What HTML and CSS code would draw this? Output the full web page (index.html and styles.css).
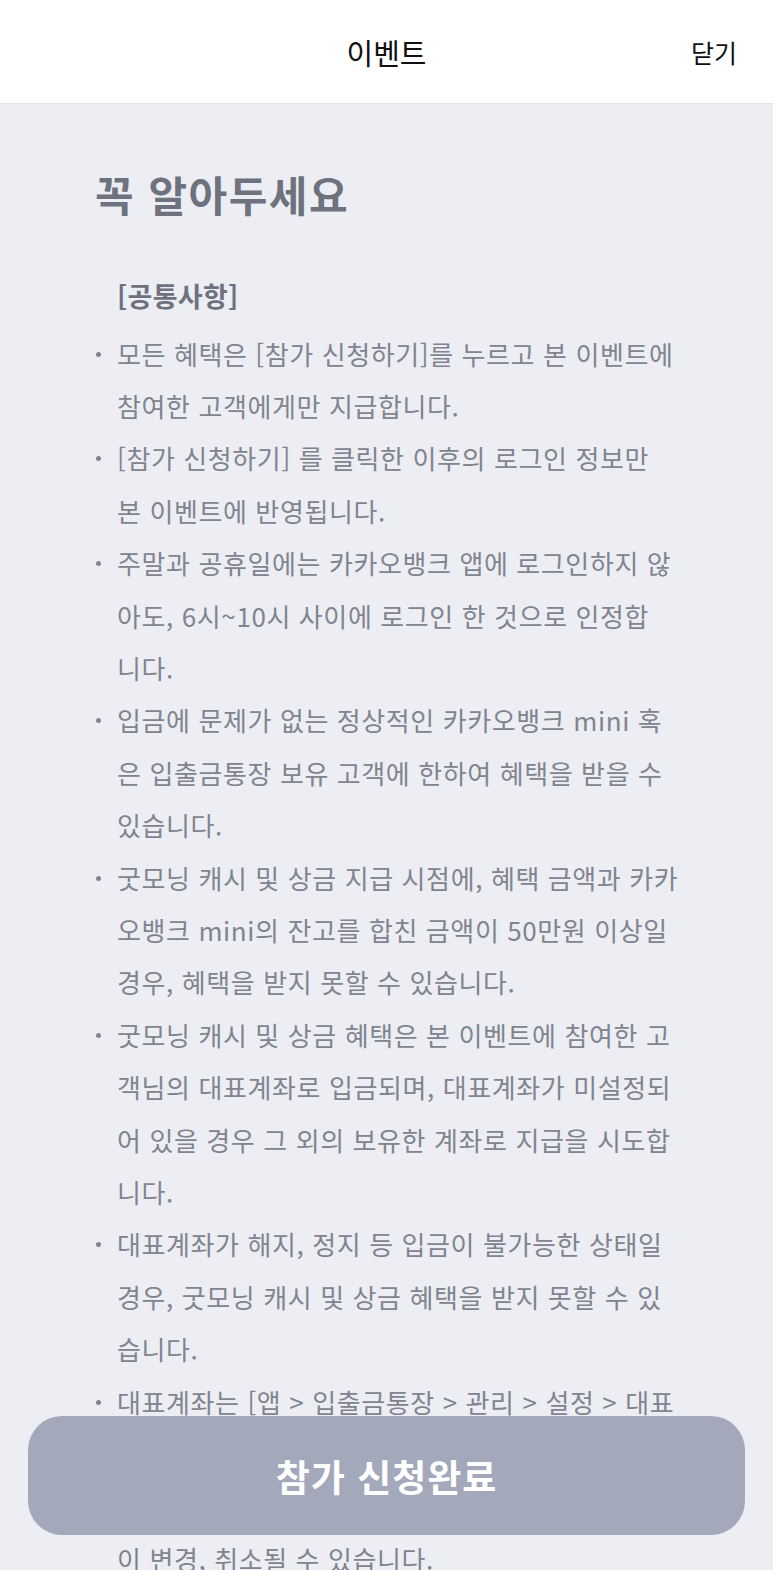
FILE: index.html
```html
<!DOCTYPE html>
<html lang="ko">
<head>
    <meta charset="UTF-8">
    <meta name="viewport" content="width=device-width, initial-scale=1.0">
    <title>이벤트</title>
    <link rel="stylesheet" href="styles.css">
</head>
<body>
    <header class="top-bar">
        <h1 class="top-title">이벤트</h1>
        <a class="close-btn" href="#">닫기</a>
    </header>

    <main class="notice">
        <h2 class="notice-title">꼭 알아두세요</h2>
        <h3 class="notice-sub">[공통사항]</h3>
        <ul class="notice-list">
            <li>모든 혜택은 [참가 신청하기]를 누르고 본 이벤트에<br>참여한 고객에게만 지급합니다.</li>
            <li>[참가 신청하기] 를 클릭한 이후의 로그인 정보만<br>본 이벤트에 반영됩니다.</li>
            <li>주말과 공휴일에는 카카오뱅크 앱에 로그인하지 않<br>아도, 6시~10시 사이에 로그인 한 것으로 인정합<br>니다.</li>
            <li>입금에 문제가 없는 정상적인 카카오뱅크 mini 혹<br>은 입출금통장 보유 고객에 한하여 혜택을 받을 수<br>있습니다.</li>
            <li>굿모닝 캐시 및 상금 지급 시점에, 혜택 금액과 카카<br>오뱅크 mini의 잔고를 합친 금액이 50만원 이상일<br>경우, 혜택을 받지 못할 수 있습니다.</li>
            <li>굿모닝 캐시 및 상금 혜택은 본 이벤트에 참여한 고<br>객님의 대표계좌로 입금되며, 대표계좌가 미설정되<br>어 있을 경우 그 외의 보유한 계좌로 지급을 시도합<br>니다.</li>
            <li>대표계좌가 해지, 정지 등 입금이 불가능한 상태일<br>경우, 굿모닝 캐시 및 상금 혜택을 받지 못할 수 있<br>습니다.</li>
            <li>대표계좌는 [앱 &gt; 입출금통장 &gt; 관리 &gt; 설정 &gt; 대표<br>계좌 설정]에서 변경할 수 있습니다.</li>
            <li>본 이벤트는 당행 사정에 따라 사전 공지 없<br>이 변경, 취소될 수 있습니다.</li>
        </ul>
    </main>

    <button type="button" class="apply-btn">참가 신청완료</button>
</body>
</html>
```

FILE: styles.css
```css
*{
    margin: 0;
    padding: 0;
    box-sizing: border-box;
    font-family: "Noto Sans CJK KR", "Noto Sans", sans-serif;
}
body{
    background-color: #edeef3;
    padding-bottom: 200px;
}
.top-bar{
    height: 104px;
    background-color: #ffffff;
    border-bottom: 1px solid #e3e4e9;
    display: flex;
    align-items: center;
    justify-content: center;
    position: relative;
}
.top-title{
    font-size: 29px;
    font-weight: 400;
    color: #111111;
}
.close-btn{
    position: absolute;
    right: 36px;
    top: 50%;
    transform: translateY(-50%);
    font-size: 25px;
    color: #111111;
    text-decoration: none;
}
.notice{
    padding: 0 40px 0 95px;
}
.notice-title{
    margin-top: 62px;
    font-size: 42px;
    line-height: 56px;
    font-weight: 700;
    letter-spacing: 1.5px;
    color: #6e727e;
}
.notice-sub{
    margin-top: 48px;
    padding-left: 22px;
    font-size: 27px;
    line-height: 52.5px;
    font-weight: 700;
    letter-spacing: 0.3px;
    color: #6e727e;
}
.notice-list{
    margin-top: 5px;
    list-style: none;
}
.notice-list li{
    position: relative;
    padding-left: 22px;
    font-size: 26px;
    line-height: 52.4px;
    letter-spacing: 0.6px;
    color: #80848f;
    white-space: nowrap;
}
.notice-list li::before{
    content: "";
    position: absolute;
    left: 1px;
    top: 24px;
    width: 5px;
    height: 5px;
    border-radius: 50%;
    background-color: #80848f;
}
.apply-btn{
    position: fixed;
    left: 28px;
    right: 28px;
    bottom: 35px;
    height: 119px;
    border: none;
    border-radius: 34px;
    background-color: #a3a8bb;
    color: #ffffff;
    font-size: 37px;
    font-weight: 700;
    letter-spacing: 1px;
}
```
